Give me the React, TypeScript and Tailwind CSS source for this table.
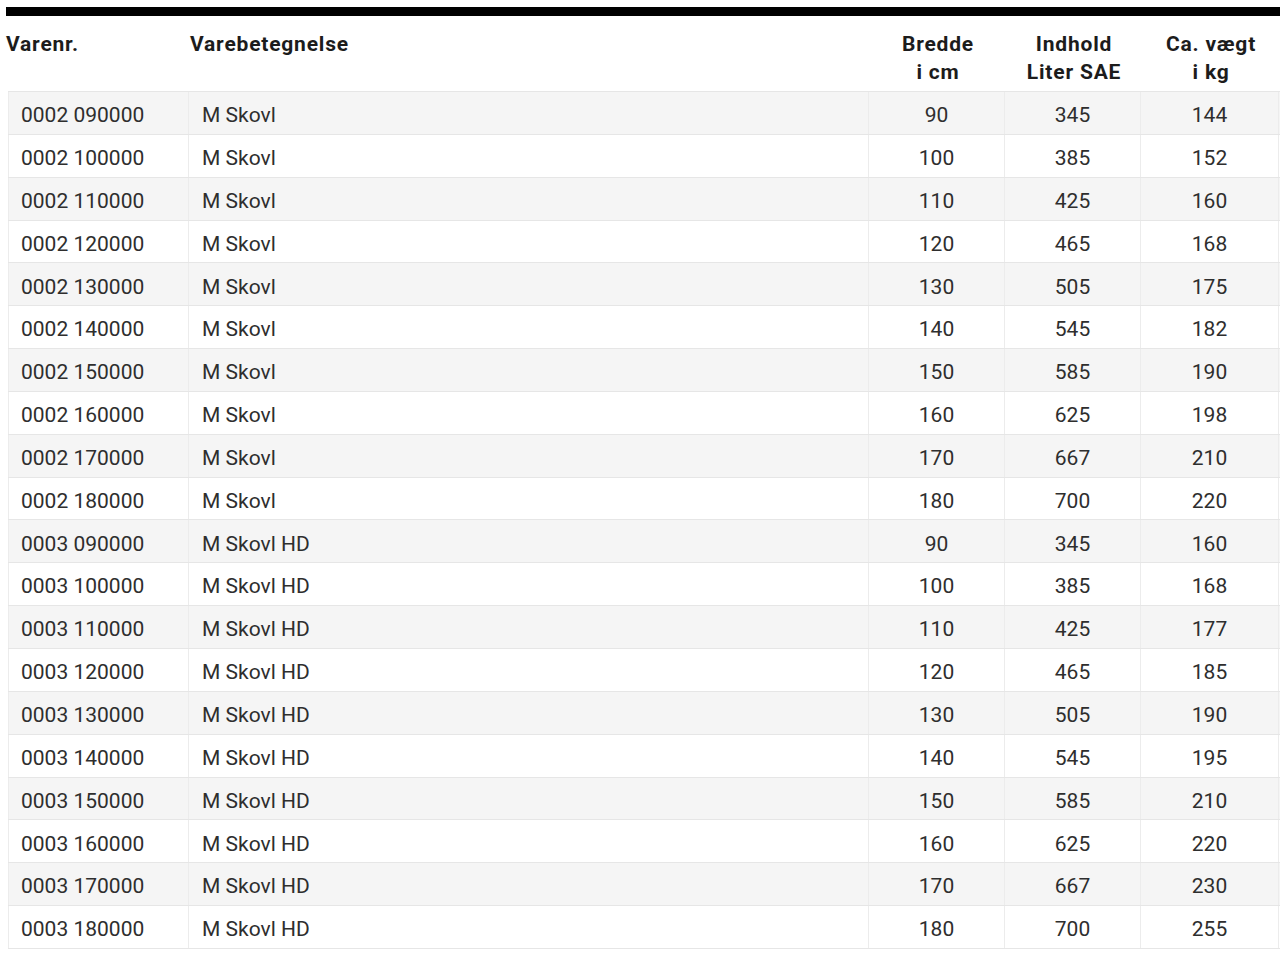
const ROWS = [
  ['0002 090000', 'M Skovl', '90', '345', '144'],
  ['0002 100000', 'M Skovl', '100', '385', '152'],
  ['0002 110000', 'M Skovl', '110', '425', '160'],
  ['0002 120000', 'M Skovl', '120', '465', '168'],
  ['0002 130000', 'M Skovl', '130', '505', '175'],
  ['0002 140000', 'M Skovl', '140', '545', '182'],
  ['0002 150000', 'M Skovl', '150', '585', '190'],
  ['0002 160000', 'M Skovl', '160', '625', '198'],
  ['0002 170000', 'M Skovl', '170', '667', '210'],
  ['0002 180000', 'M Skovl', '180', '700', '220'],
  ['0003 090000', 'M Skovl HD', '90', '345', '160'],
  ['0003 100000', 'M Skovl HD', '100', '385', '168'],
  ['0003 110000', 'M Skovl HD', '110', '425', '177'],
  ['0003 120000', 'M Skovl HD', '120', '465', '185'],
  ['0003 130000', 'M Skovl HD', '130', '505', '190'],
  ['0003 140000', 'M Skovl HD', '140', '545', '195'],
  ['0003 150000', 'M Skovl HD', '150', '585', '210'],
  ['0003 160000', 'M Skovl HD', '160', '625', '220'],
  ['0003 170000', 'M Skovl HD', '170', '667', '230'],
  ['0003 180000', 'M Skovl HD', '180', '700', '255'],
];

export default function App() {
  return (
    <div className="min-h-screen bg-white pt-[7px] pl-[6px] font-['Roboto',sans-serif]">
      {/* top rule */}
      <div className="h-[9px] bg-black" />

      {/* header */}
      <div className="flex h-[75px] pt-[14px] text-[21px] font-bold leading-[28px] tracking-[0.8px] text-[#1c1c1c]">
        <div className="w-[184px]">Varenr.</div>
        <div className="w-[680px]">Varebetegnelse</div>
        <div className="w-[136px] text-center">Bredde<br />i cm</div>
        <div className="w-[136px] text-center">Indhold<br />Liter SAE</div>
        <div className="w-[138px] text-center">Ca. vægt<br />i kg</div>
      </div>

      {/* body */}
      <div className="ml-[2px] border-b border-[#e6e6e6] text-[21px] text-[#2e2e2e]">
        {ROWS.map((r, i) => (
          <div
            key={r[0]}
            className={`flex h-[42.85px] border-t border-[#e6e6e6] ${i % 2 === 0 ? 'bg-[#f5f5f5]' : 'bg-white'}`}
          >
            <div className="flex w-[181px] items-center border-x border-[#ececec] pt-[6px] pl-[12px]">{r[0]}</div>
            <div className="flex w-[680px] items-center border-r border-[#ececec] pt-[6px] pl-[13px]">{r[1]}</div>
            <div className="flex w-[136px] items-center justify-center border-r border-[#ececec] pt-[6px]">{r[2]}</div>
            <div className="flex w-[136px] items-center justify-center border-r border-[#ececec] pt-[6px]">{r[3]}</div>
            <div className="flex w-[138px] items-center justify-center border-r border-[#ececec] pt-[6px]">{r[4]}</div>
          </div>
        ))}
      </div>
    </div>
  );
}
